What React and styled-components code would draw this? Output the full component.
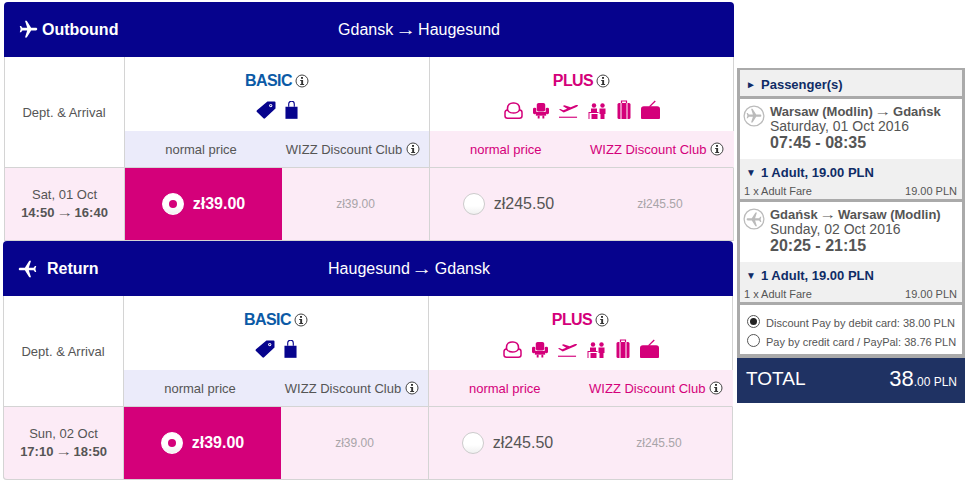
import React from 'react';
import styled, { createGlobalStyle } from 'styled-components';

const GlobalStyle = createGlobalStyle`
  html, body {
    margin: 0;
    padding: 0;
    background: #fff;
    font-family: "Liberation Sans", Arial, sans-serif;
    color: #555;
  }
`;

const Page = styled.div`
  display: flex;
  align-items: flex-start;
  width: 968px;
  height: 483px;
  overflow: hidden;
  padding: 2px 0 0 3px;
  box-sizing: border-box;
`;

const Flights = styled.div`
  width: 731px;
  flex: none;
`;

const Flight = styled.section`
  width: 730px;
  margin-left: ${({ $first }) => ($first ? '1px' : '0')};
`;

const Header = styled.header`
  height: 55px;
  background: #06038d;
  border-radius: 4px 4px 0 0;
  color: #fff;
  display: grid;
  grid-template-columns: 121px 1fr;
  align-items: center;
`;

const Direction = styled.div`
  display: flex;
  align-items: center;
  gap: ${({ $gap }) => $gap}px;
  padding-left: 14px;
  font-size: 16px;
  font-weight: bold;
  white-space: nowrap;
`;

const Route = styled.div`
  text-align: center;
  font-size: 16px;
  padding-right: ${({ $inset }) => $inset}px;
`;

const Arrow = styled.span`
  display: inline-block;
  transform: scaleX(1.3);
`;

const Table = styled.div`
  display: grid;
  grid-template-columns: 120px 305px 304px;
  grid-template-rows: 74px 37px 73px;
  border-left: 1px solid #d4d4d4;
  border-radius: 0 0 4px 4px;
`;

const DeptCell = styled.div`
  grid-row: span 2;
  border-right: 1px solid #d4d4d4;
  border-bottom: 1px solid #d4d4d4;
  display: flex;
  align-items: center;
  justify-content: center;
  font-size: 13px;
  margin-left: -1px;
`;

const Fare = styled.div`
  border-right: 1px solid #d4d4d4;
  text-align: center;
  padding-top: 15px;
  box-sizing: border-box;
`;

const FareName = styled.div`
  display: flex;
  justify-content: center;
  align-items: center;
  gap: 3px;
  height: 18px;
  font-size: 16px;
  font-weight: bold;
  letter-spacing: -0.6px;
  color: ${({ $plus }) => ($plus ? '#d4007a' : '#0b5aa6')};
`;

const Perks = styled.div`
  display: flex;
  justify-content: center;
  align-items: flex-end;
  gap: ${({ $gap }) => $gap}px;
  margin-top: 9px;
  height: 20px;
`;

const PriceHeads = styled.div`
  display: grid;
  grid-template-columns: 1fr 1fr;
  align-items: center;
  background: ${({ $plus }) => ($plus ? '#fcebf6' : '#ebebfa')};
  color: ${({ $plus }) => ($plus ? '#d4007a' : '#555')};
  border-bottom: 1px solid #d4d4d4;
  border-right: 1px solid ${({ $plus }) => ($plus ? 'transparent' : '#d4d4d4')};
  font-size: 13px;
`;

const PriceHead = styled.div`
  display: flex;
  justify-content: center;
  align-items: center;
  gap: 4px;
  white-space: nowrap;
`;

const DateCell = styled.div`
  background: #fcebf6;
  border-right: 1px solid #d4d4d4;
  border-bottom: 1px solid #d4d4d4;
  border-left: 1px solid #d4d4d4;
  margin-left: -1px;
  border-radius: ${({ $rounded }) => ($rounded ? '0 0 0 4px' : '0')};
  display: flex;
  flex-direction: column;
  align-items: center;
  justify-content: center;
  font-size: 13px;
  line-height: 18px;
`;

const Times = styled.strong`
  white-space: nowrap;
`;

const Prices = styled.div`
  display: grid;
  grid-template-columns: 157px 1fr;
  background: #fcebf6;
  border-right: 1px solid #d4d4d4;
  border-bottom: 1px solid #d4d4d4;
`;

const PriceCell = styled.div`
  display: flex;
  align-items: center;
  justify-content: center;
  gap: 9px;
  background: ${({ $selected }) => ($selected ? '#d4007a' : 'transparent')};
  color: ${({ $selected }) => ($selected ? '#fff' : '#555')};
  font-size: 16px;
  font-weight: ${({ $selected }) => ($selected ? 'bold' : 'normal')};
`;

const ClubPrice = styled.div`
  display: flex;
  align-items: center;
  justify-content: center;
  font-size: 12px;
  color: #a8a4a8;
`;

const Radio = styled.span`
  width: 22px;
  height: 22px;
  box-sizing: border-box;
  border-radius: 50%;
  flex: none;
  display: flex;
  align-items: center;
  justify-content: center;
  background: linear-gradient(#fff 60%, #f0f0f0);
  border: 1px solid ${({ $selected }) => ($selected ? '#fff' : '#ccc')};

  &::after {
    content: '';
    display: ${({ $selected }) => ($selected ? 'block' : 'none')};
    width: 8px;
    height: 8px;
    border-radius: 50%;
    background: #d4007a;
  }
`;

const Sidebar = styled.aside`
  width: 228px;
  margin: 66px 0 0 3px;
  flex: none;
`;

const SideBox = styled.div`
  background: #aaa;
  padding: 2px 3px 4px;
  display: flex;
  flex-direction: column;
  gap: 3px;
`;

const SideRow = styled.div`
  background: #f0f0f0;
  height: 26px;
  display: flex;
  align-items: center;
  gap: 5px;
  padding: 3px 0 0 6px;
  box-sizing: border-box;
  font-size: 13px;
  font-weight: bold;
  color: #0f2c66;
`;

const Trip = styled.div`
  background: #fff;
`;

const TripInfo = styled.div`
  height: 60px;
  display: flex;
  gap: 5px;
  padding: 5px 0 0 3px;
  box-sizing: border-box;
`;

const TripText = styled.div`
  font-size: 14px;
  line-height: 15px;
  white-space: nowrap;
`;

const TripRoute = styled.div`
  font-size: 13px;
  font-weight: bold;
`;

const TripTime = styled.div`
  font-size: 16px;
  font-weight: bold;
  line-height: 18px;
`;

const Bill = styled.div`
  background: #f0f0f0;
  height: 40px;
  padding: 5px 5px 0 6px;
  box-sizing: border-box;
`;

const BillTitle = styled.div`
  display: flex;
  align-items: center;
  gap: 5px;
  font-size: 13px;
  font-weight: bold;
  color: #0f2c66;
  line-height: 18px;
`;

const Caret = styled.span`
  font-size: 10px;
  width: 10px;
`;

const BillLine = styled.div`
  display: flex;
  justify-content: space-between;
  font-size: 11px;
  line-height: 14px;
  margin: 2px 0 0 -2px;
`;

const Payments = styled.div`
  background: #fff;
  height: 49px;
  padding: 8px 0 0 7px;
  box-sizing: border-box;
  font-size: 11px;
`;

const Payment = styled.div`
  display: flex;
  align-items: center;
  gap: 6px;
  height: 19px;
  white-space: nowrap;
`;

const PayRadio = styled.span`
  width: 13px;
  height: 13px;
  box-sizing: border-box;
  border: 1px solid #555;
  border-radius: 50%;
  flex: none;
  display: flex;
  align-items: center;
  justify-content: center;
  margin-top: -3px;

  &::after {
    content: '';
    display: ${({ $checked }) => ($checked ? 'block' : 'none')};
    width: 7px;
    height: 7px;
    border-radius: 50%;
    background: #222;
  }
`;

const Total = styled.div`
  background: #1f3263;
  color: #fff;
  height: 45px;
  display: flex;
  justify-content: space-between;
  align-items: center;
  padding: 0 8px 3px 9px;
  box-sizing: border-box;
  font-size: 19px;
`;

const Amount = styled.div`
  font-size: 22px;
`;

const Cents = styled.span`
  font-size: 12px;
`;

const withArrow = (text) => {
  const [from, to] = text.split('→');
  return (
    <>
      {from}
      <Arrow>→</Arrow>
      {to}
    </>
  );
};

const Plane = ({ size = 21, color = '#fff', angle = 90 }) => (
  <svg width={size} height={size} viewBox="0 0 24 24" fill={color} style={{ flex: 'none' }}>
    <path
      transform={`rotate(${angle} 12 12)`}
      d="M21 16v-2l-8-5V3.5c0-.83-.67-1.5-1.5-1.5S10 2.67 10 3.5V9l-8 5v2l8-2.5V19l-2 1.5V22l3.5-1 3.500 1v-1.500L13 19v-5.500l8 2.500z"
    />
  </svg>
);

const CirclePlane = ({ angle }) => (
  <svg width="22" height="22" viewBox="0 0 24 24" style={{ flex: 'none', marginTop: 1 }}>
    <circle cx="12" cy="12" r="10.8" fill="none" stroke="#bbb" strokeWidth="1.4" />
    <path
      fill="#bbb"
      transform={`translate(2.4 2.4) scale(.8) rotate(${angle} 12 12)`}
      d="M21 16v-2l-8-5V3.5c0-.83-.67-1.5-1.5-1.5S10 2.67 10 3.5V9l-8 5v2l8-2.5V19l-2 1.5V22l3.5-1 3.500 1v-1.500L13 19v-5.500l8 2.500z"
    />
  </svg>
);

const Info = () => (
  <svg width="14" height="14" viewBox="0 0 14 14" style={{ flex: 'none' }}>
    <circle cx="7" cy="7" r="6" fill="#fff" stroke="#444" strokeWidth="1" />
    <rect x="6" y="3" width="2" height="1.8" fill="#333" />
    <path d="M5.2 6h2.9v4h1v1H5.2v-1h1V7h-1z" fill="#333" />
  </svg>
);

const Tag = () => (
  <svg width="20" height="19" viewBox="0 0 21 20">
    <path d="M12 1.500h7.500a1 1 0 0 1 1 1V9L9.500 19.200a1.200 1.200 0 0 1-1.700 0L1 12.600a1.200 1.200 0 0 1 0-1.700z" fill="#06038d" />
    <circle cx="15.500" cy="5.800" r="1.700" fill="#fff" />
    <circle cx="15.500" cy="5.800" r=".7" fill="#06038d" />
  </svg>
);

const Bag = () => (
  <svg width="13" height="18" viewBox="0 0 14 19">
    <path d="M4 6V3a3 3 0 0 1 6 0v3" fill="none" stroke="#06038d" strokeWidth="1.200" />
    <rect x="0.500" y="6" width="13" height="13" fill="#06038d" />
  </svg>
);

const pink = '#d4007a';

const Headrest = () => (
  <svg width="19" height="17" viewBox="0 0 19 17">
    <path d="M3.500 9V6.500C3.500 3 6 1 9 1h1c3 0 5.500 2 5.500 5.500V9" fill="none" stroke={pink} strokeWidth="1.600" />
    <path d="M3.500 8C1.800 8 1 9 1 10.500V14c0 1.500 1 2.200 2.500 2.200h12c1.500 0 2.500-.7 2.500-2.200v-3.500C18 9 17.200 8 15.500 8c-1 2-3 3-6 3s-5-1-6-3z" fill="#fff" stroke={pink} strokeWidth="1.500" />
  </svg>
);

const Seat = () => (
  <svg width="16" height="17" viewBox="0 0 17 17" fill={pink}>
    <rect x="4" y="0.500" width="9" height="9" rx="2" />
    <rect x="0" y="5.500" width="3.500" height="7" rx="1.500" />
    <rect x="13.500" y="5.500" width="3.500" height="7" rx="1.500" />
    <rect x="3" y="10" width="11" height="4" />
    <rect x="5" y="14" width="2" height="3" />
    <rect x="10" y="14" width="2" height="3" />
  </svg>
);

const Takeoff = () => (
  <svg width="19" height="17" viewBox="0 0 20 17" fill={pink}>
    <path d="M0 7.500l1.500-.6 3 1.400 4-1.700L4 3.700l1.800-.7 6.500 2 5-2.100c1-.4 2.300-.4 2.600.2.200.6-.6 1.200-1.500 1.600L5 10.700z" />
    <rect x="0" y="15" width="19" height="1.200" />
  </svg>
);

const Staff = () => (
  <svg width="19" height="16" viewBox="0 0 18 16" fill={pink}>
    <circle cx="5.500" cy="2.500" r="2.200" />
    <circle cx="14" cy="2.500" r="2.200" />
    <path d="M2.500 5.500h6V9h-6z" />
    <path d="M11 5.500h6V11h-1v5h-4v-5h-1z" />
    <path d="M0 9h1v7H0zM1 9h9v1H1zM3 11h6v5H3z" />
  </svg>
);

const Suitcase = () => (
  <svg width="14" height="19" viewBox="0 0 14 19">
    <path d="M4.500 3V1h5v2" fill="none" stroke={pink} strokeWidth="1.200" />
    <rect x="0.500" y="3" width="13" height="16" rx="1.500" fill={pink} />
    <rect x="3.500" y="3" width="1" height="16" fill="#fff" />
    <rect x="9.500" y="3" width="1" height="16" fill="#fff" />
  </svg>
);

const Duffel = () => (
  <svg width="19" height="19" viewBox="0 0 20 20">
    <path d="M9 7l6-6" stroke={pink} strokeWidth="1.400" fill="none" />
    <path d="M3 6.500h14a3 3 0 0 1 3 3V19a1 1 0 0 1-1 1H1a1 1 0 0 1-1-1V9.500a3 3 0 0 1 3-3z" fill={pink} />
  </svg>
);

const flights = [
  {
    title: 'Outbound',
    route: 'Gdansk → Haugesund',
    date: 'Sat, 01 Oct',
    times: '14:50 → 16:40',
    angle: 90,
    gap: 3,
    inset: 21,
  },
  {
    title: 'Return',
    route: 'Haugesund → Gdansk',
    date: 'Sun, 02 Oct',
    times: '17:10 → 18:50',
    angle: -90,
    gap: 9,
    inset: 39,
  },
];

const trips = [
  { route: 'Warsaw (Modlin) → Gdańsk', date: 'Saturday, 01 Oct 2016', time: '07:45 - 08:35', angle: 90 },
  { route: 'Gdańsk → Warsaw (Modlin)', date: 'Sunday, 02 Oct 2016', time: '20:25 - 21:15', angle: -90 },
];

function FlightTable({ flight, first }) {
  return (
    <Flight $first={first}>
      <Header>
        <Direction $gap={flight.gap}>
          <Plane angle={flight.angle} />
          {flight.title}
        </Direction>
        <Route $inset={flight.inset}>{withArrow(flight.route)}</Route>
      </Header>
      <Table>
        <DeptCell>Dept. &amp; Arrival</DeptCell>
        <Fare>
          <FareName>BASIC <Info /></FareName>
          <Perks $gap={9}><Tag /><Bag /></Perks>
        </Fare>
        <Fare>
          <FareName $plus>PLUS <Info /></FareName>
          <Perks $gap={10}>
            <Headrest /><Seat /><Takeoff /><Staff /><Suitcase /><Duffel />
          </Perks>
        </Fare>
        <PriceHeads>
          <PriceHead>normal price</PriceHead>
          <PriceHead>WIZZ Discount Club <Info /></PriceHead>
        </PriceHeads>
        <PriceHeads $plus>
          <PriceHead>normal price</PriceHead>
          <PriceHead>WIZZ Discount Club <Info /></PriceHead>
        </PriceHeads>
        <DateCell $rounded={!first}>
          {flight.date}
          <Times>{withArrow(flight.times)}</Times>
        </DateCell>
        <Prices>
          <PriceCell $selected><Radio $selected />zł39.00</PriceCell>
          <ClubPrice>zł39.00</ClubPrice>
        </Prices>
        <Prices>
          <PriceCell><Radio />zł245.50</PriceCell>
          <ClubPrice>zł245.50</ClubPrice>
        </Prices>
      </Table>
    </Flight>
  );
}

export default function App() {
  return (
    <Page>
      <GlobalStyle />
      <Flights>
        {flights.map((flight, i) => (
          <FlightTable key={flight.title} flight={flight} first={i === 0} />
        ))}
      </Flights>
      <Sidebar>
        <SideBox>
          <SideRow><Caret>►</Caret>Passenger(s)</SideRow>
          {trips.map((trip) => (
            <Trip key={trip.date}>
              <TripInfo>
                <CirclePlane angle={trip.angle} />
                <TripText>
                  <TripRoute>{withArrow(trip.route)}</TripRoute>
                  <div>{trip.date}</div>
                  <TripTime>{trip.time}</TripTime>
                </TripText>
              </TripInfo>
              <Bill>
                <BillTitle><Caret>▼</Caret>1 Adult, 19.00 PLN</BillTitle>
                <BillLine><span>1 x Adult Fare</span><span>19.00 PLN</span></BillLine>
              </Bill>
            </Trip>
          ))}
          <Payments>
            <Payment><PayRadio $checked />Discount Pay by debit card: 38.00 PLN</Payment>
            <Payment><PayRadio />Pay by credit card / PayPal: 38.76 PLN</Payment>
          </Payments>
        </SideBox>
        <Total>
          <span>TOTAL</span>
          <Amount>38<Cents>.00 PLN</Cents></Amount>
        </Total>
      </Sidebar>
    </Page>
  );
}
